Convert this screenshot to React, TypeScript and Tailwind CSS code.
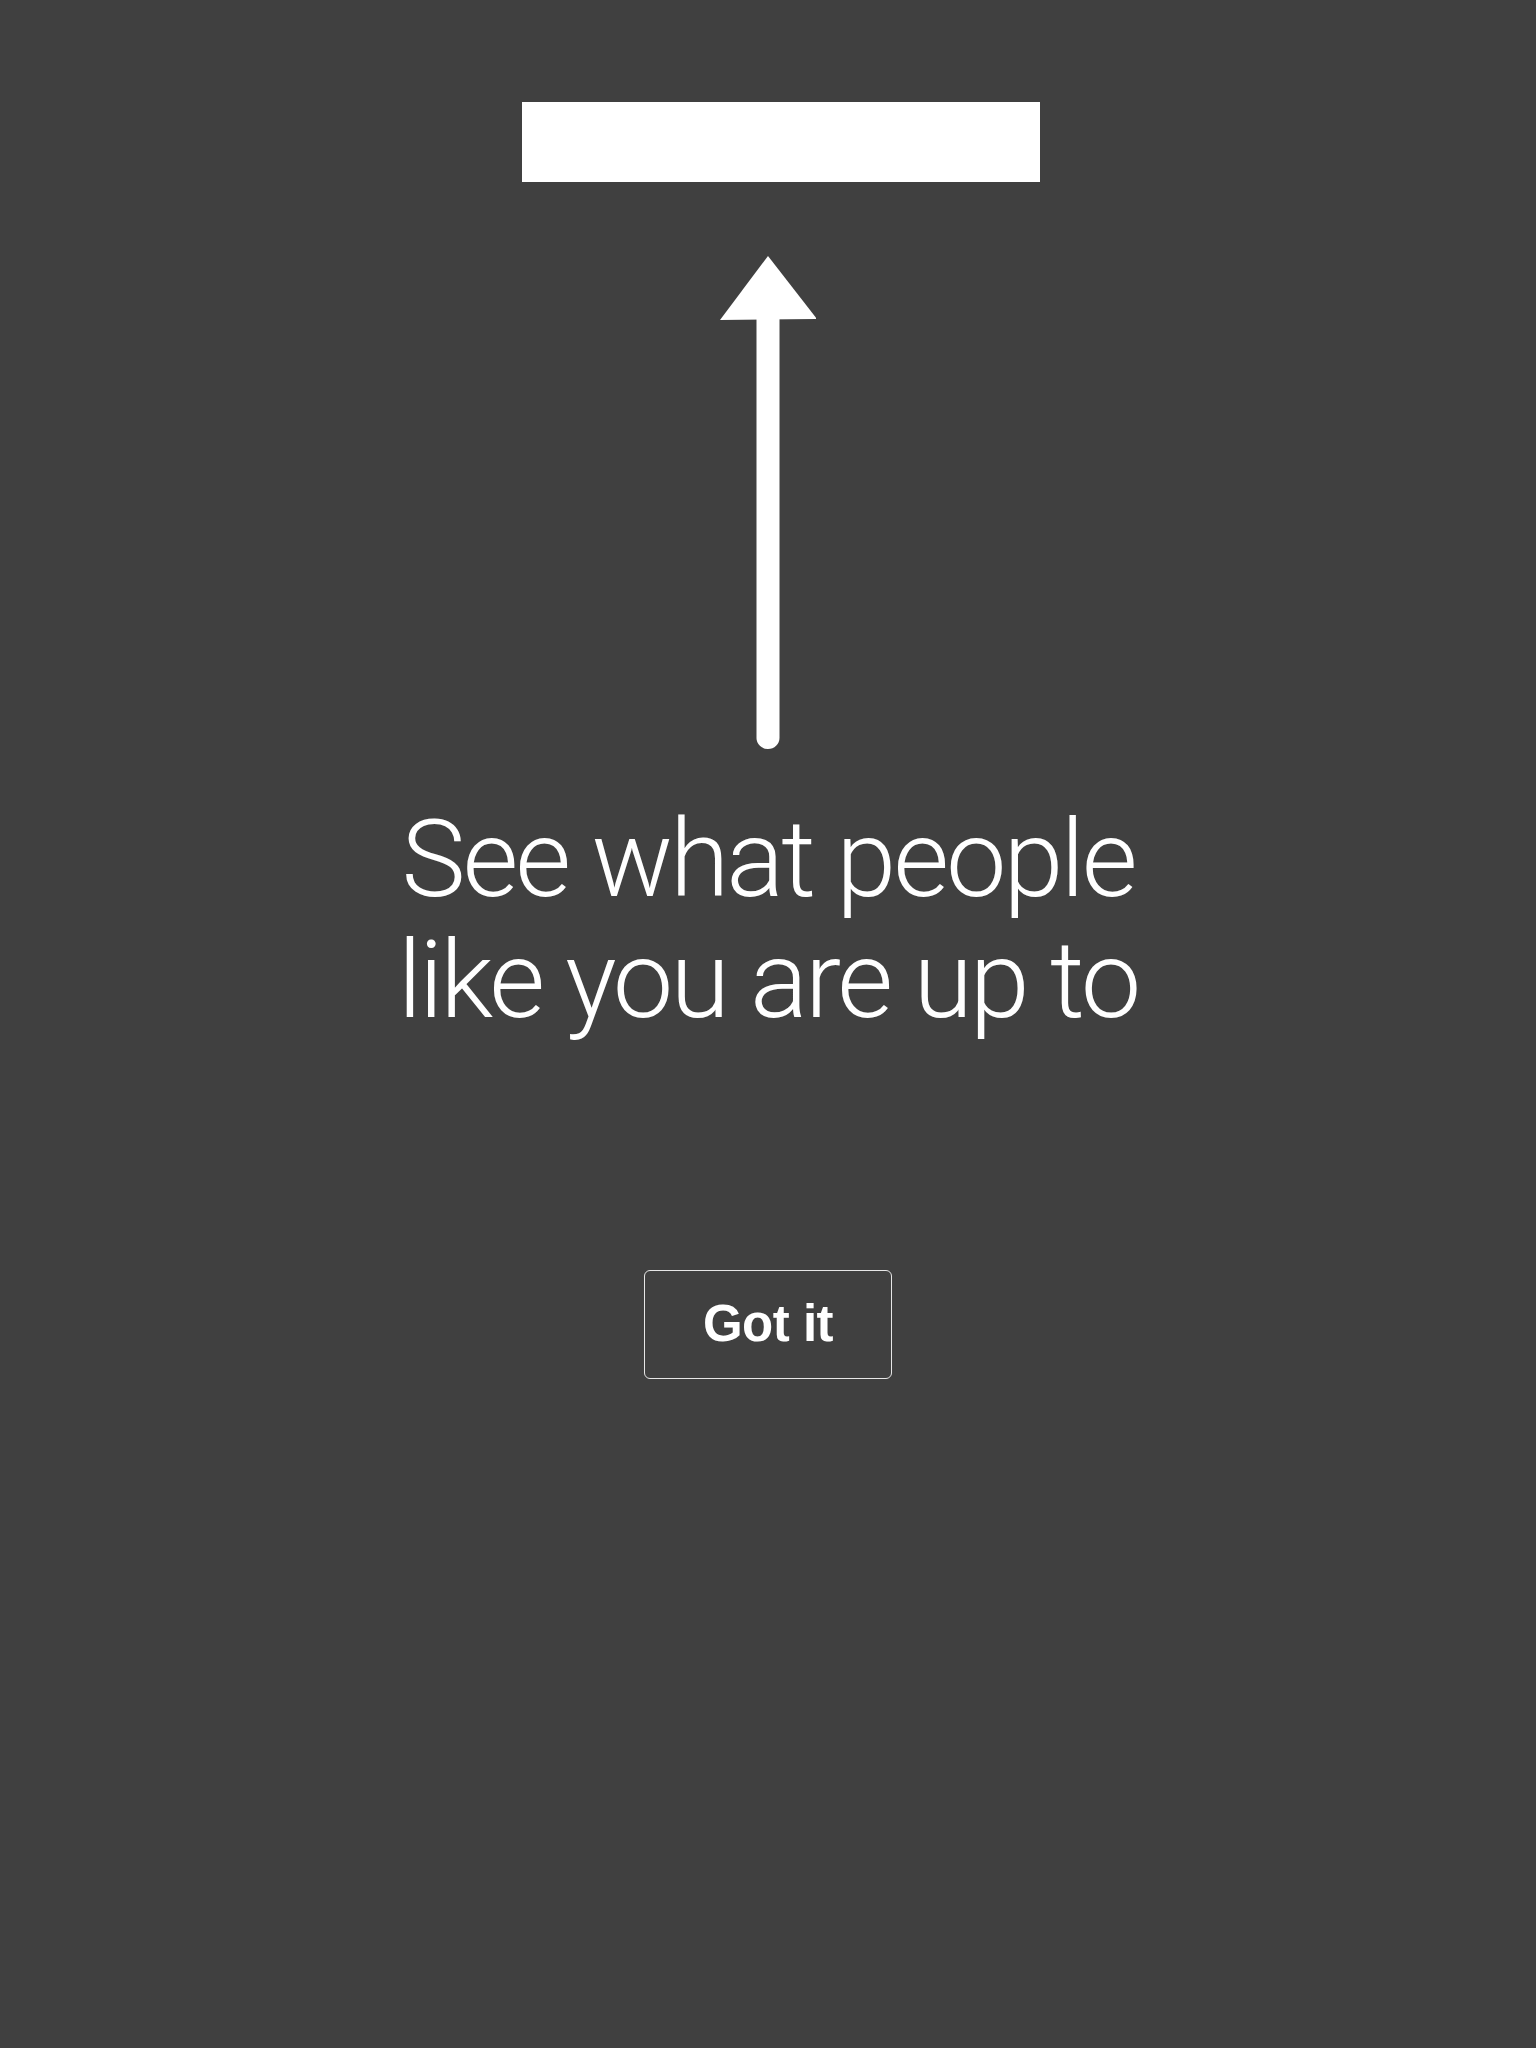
export default function App() {
  return (
    <div className="min-h-[2048px] w-full bg-[#404040] flex flex-col items-center" style={{ fontFamily: "Roboto, 'Liberation Sans', sans-serif" }}>
      {/* search bar placeholder */}
      <div className="mt-[102px] ml-[26px] w-[518px] h-[80px] bg-white" />

      {/* arrow pointing at it */}
      <svg className="mt-[74px]" width="96" height="493" viewBox="0 0 96 493" aria-hidden>
        <polygon points="48,0 0,64 97,63" fill="#fff" />
        <path d="M36.5 62 V482 a11.5 11 0 0 0 23 0 V62 Z" fill="#fff" />
      </svg>

      <h1 className="mt-[50px] text-center text-white font-light text-[108px] leading-[121px] tracking-[-3px]">
        See what people
        <br />
        like you are up to
      </h1>

      <button
        className="mt-[229px] w-[248px] h-[109px] rounded-[6px] border border-[#e6e6e6] text-white font-bold text-[51px] tracking-[-0.5px] flex items-center justify-center"
        style={{ fontFamily: "'Liberation Sans', Arial, sans-serif" }}
      >
        Got it
      </button>
    </div>
  );
}
